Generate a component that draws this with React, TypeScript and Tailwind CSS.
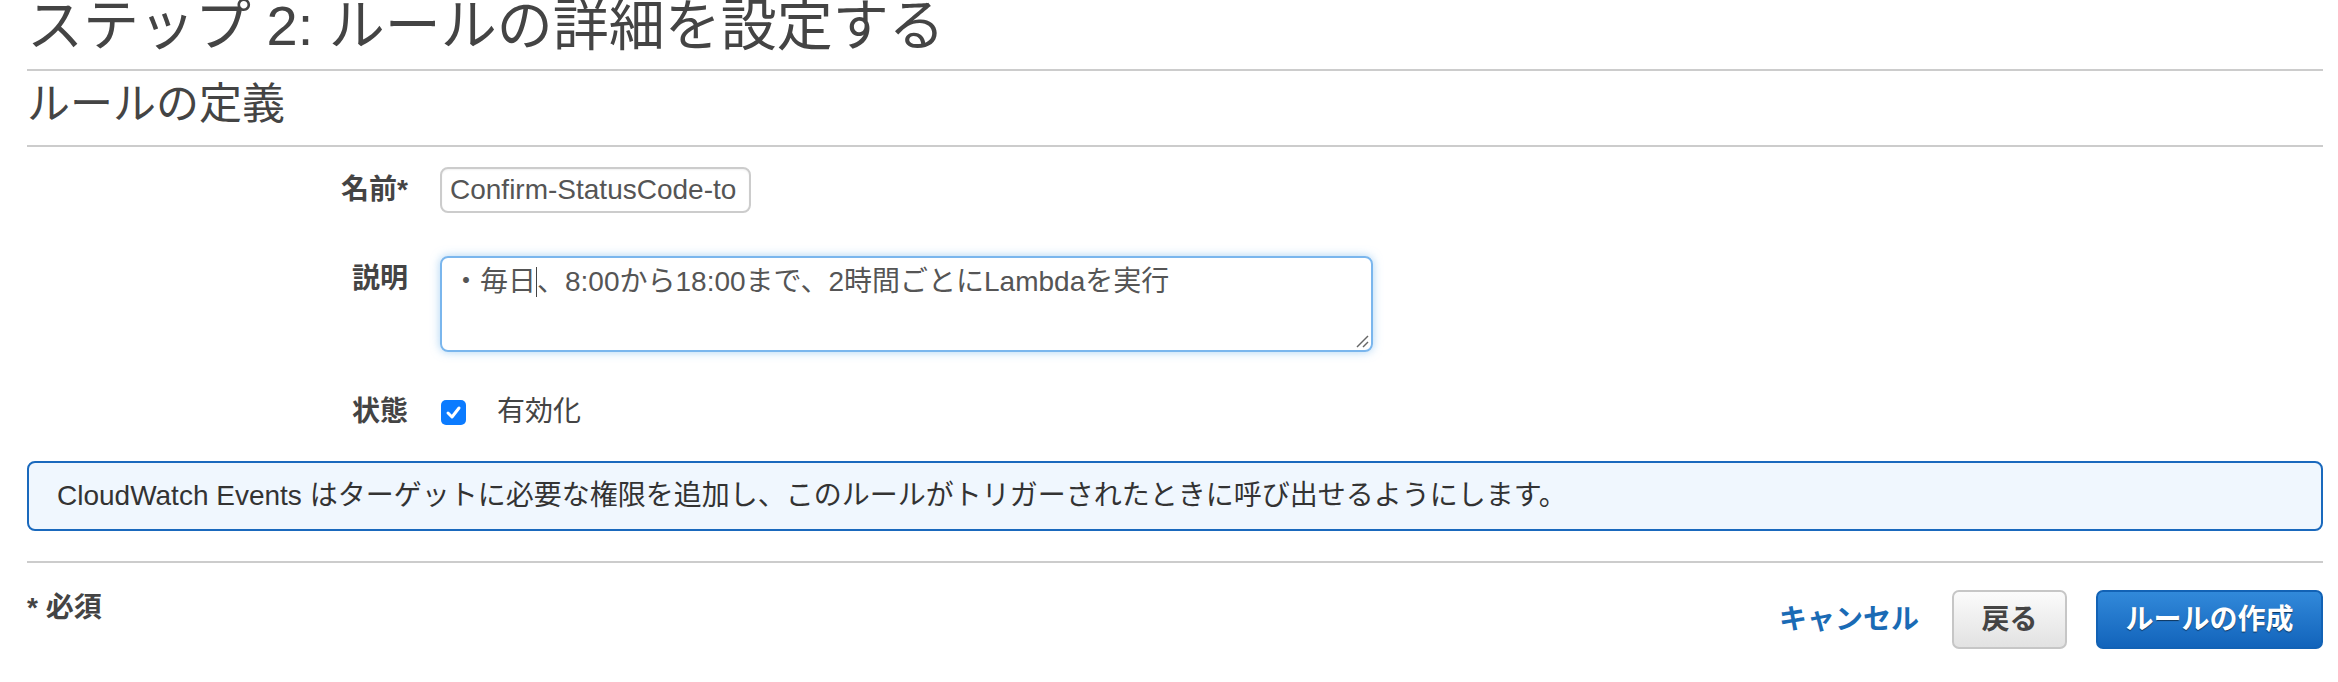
import React from "react";

export default function App() {
  return (
    <div className="w-[2338px] h-[682px] overflow-hidden bg-white pl-[27px] pr-[15px] text-[#444] font-['Liberation_Sans','Noto_Sans_CJK_JP',sans-serif]">
      <h1 className="text-[56px] leading-[52px] h-[71px] pb-[17px] border-b-2 border-[#ccc] font-normal whitespace-nowrap">
        ステップ 2: ルールの詳細を設定する
      </h1>
      <h2 className="pt-[8px] text-[43px] leading-[50px] h-[76px] pb-[16px] border-b-2 border-[#ccc] font-normal">
        ルールの定義
      </h2>

      <div className="mt-[20px] flex items-center h-[46px]">
        <div className="w-[381px] text-right font-bold text-[28px] leading-[40px]">名前*</div>
        <div className="ml-[32px] w-[311px] h-[46px] border-2 border-[#ccc] rounded-[8px] pl-[8px] text-[28px] leading-[42px] text-[#555] overflow-hidden whitespace-nowrap shadow-[inset_0_1px_2px_rgba(0,0,0,0.06)]">
          Confirm-StatusCode-to
        </div>
      </div>

      <div className="mt-[43px] flex items-start">
        <div className="w-[381px] text-right font-bold text-[28px] leading-[46px]">説明</div>
        <div className="relative ml-[32px] w-[933px] h-[96px] border-2 border-[#7ab6ed] rounded-[8px] shadow-[0_0_10px_rgba(102,175,233,0.55)] pl-[10px] pt-[4px] text-[28px] leading-[40px] text-[#555] whitespace-nowrap">
          ・毎日<span className="inline-block w-[1px] h-[30px] bg-[#444] align-middle -mt-[4px]"></span>、8:00から18:00まで、2時間ごとにLambdaを実行
          <svg className="absolute right-[2px] bottom-[2px]" width="14" height="14" viewBox="0 0 14 14">
            <line x1="13" y1="2" x2="2" y2="13" stroke="#666" strokeWidth="1.5" />
            <line x1="13" y1="8" x2="8" y2="13" stroke="#666" strokeWidth="1.5" />
          </svg>
        </div>
      </div>

      <div className="mt-[40px] flex items-center h-[40px]">
        <div className="w-[381px] text-right font-bold text-[28px] leading-[40px]">状態</div>
        <div className="ml-[33px] w-[25px] h-[25px] rounded-[5px] bg-[#0b7bff] flex items-center justify-center">
          <svg width="17" height="17" viewBox="0 0 17 17">
            <path d="M3 9 L7 13 L14 4" fill="none" stroke="#fff" strokeWidth="3" strokeLinecap="round" strokeLinejoin="round" />
          </svg>
        </div>
        <div className="ml-[31px] text-[28px] leading-[40px]">有効化</div>
      </div>

      <div className="mt-[29px] h-[70px] border-2 border-[#1a69bd] rounded-[8px] bg-[#f0f7fe] flex items-center pl-[28px] text-[28px] text-[#333] whitespace-nowrap">
        CloudWatch Events はターゲットに必要な権限を追加し、このルールがトリガーされたときに呼び出せるようにします。
      </div>

      <div className="mt-[30px] border-t-2 border-[#ccc]"></div>

      <div className="pt-[27px] flex justify-between items-start">
        <div className="font-bold text-[28px] leading-[36px]">* 必須</div>
        <div className="flex items-center">
          <span className="font-bold text-[28px] text-[#1a6bb5] leading-[40px]">キャンセル</span>
          <div className="ml-[33px] w-[115px] h-[59px] rounded-[7px] border-2 border-[#c6c6c6] bg-gradient-to-b from-[#fbfbfb] to-[#e2e2e2] flex items-center justify-center font-bold text-[28px] text-[#444]">
            戻る
          </div>
          <div className="ml-[29px] w-[227px] h-[59px] rounded-[7px] border-2 border-[#1262b5] bg-gradient-to-b from-[#3189da] to-[#1264bb] flex items-center justify-center font-bold text-[28px] text-white [text-shadow:0_1px_1px_rgba(0,0,0,0.55)]">
            ルールの作成
          </div>
        </div>
      </div>
    </div>
  );
}
